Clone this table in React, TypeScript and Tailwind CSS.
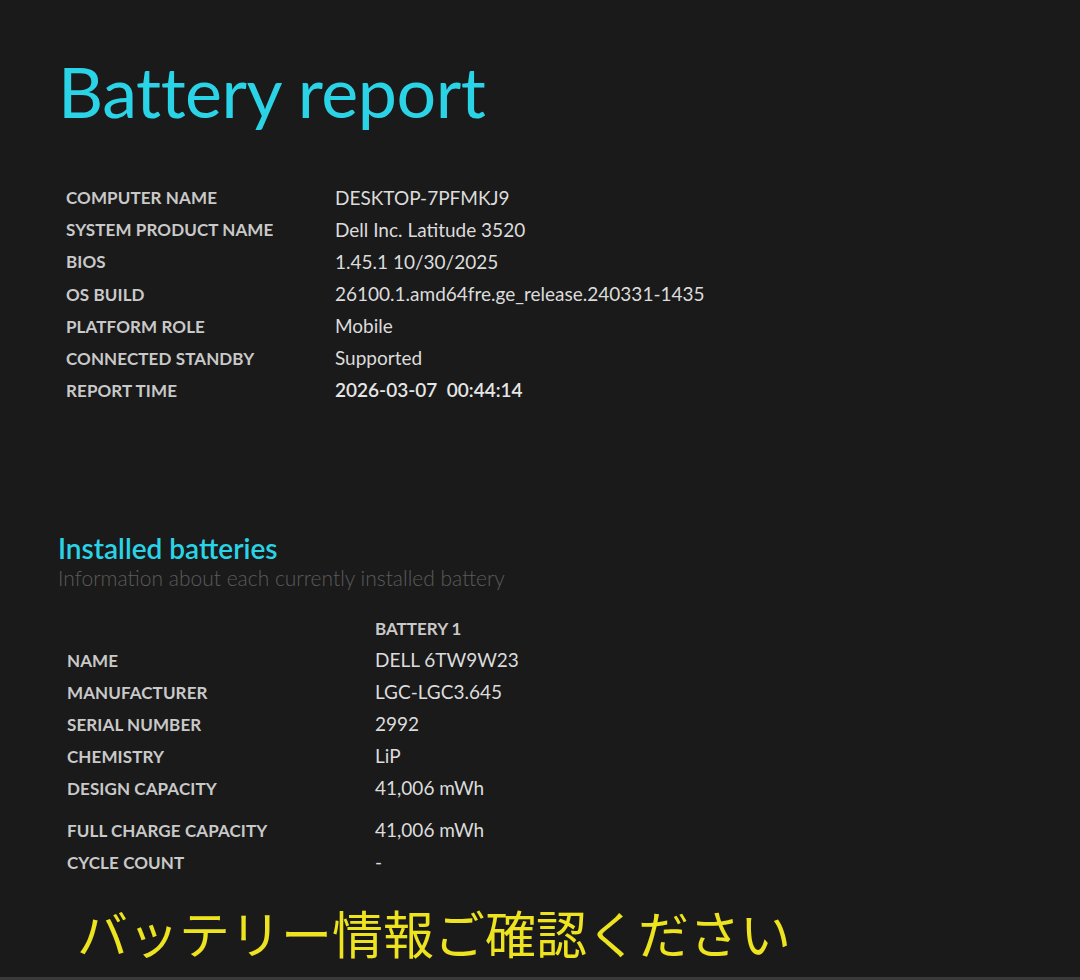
import React from 'react';

const systemRows: [string, string][] = [
  ['COMPUTER NAME', 'DESKTOP-7PFMKJ9'],
  ['SYSTEM PRODUCT NAME', 'Dell Inc. Latitude 3520'],
  ['BIOS', '1.45.1 10/30/2025'],
  ['OS BUILD', '26100.1.amd64fre.ge_release.240331-1435'],
  ['PLATFORM ROLE', 'Mobile'],
  ['CONNECTED STANDBY', 'Supported'],
];

const batteryRows: [string, string][] = [
  ['NAME', 'DELL 6TW9W23'],
  ['MANUFACTURER', 'LGC-LGC3.645'],
  ['SERIAL NUMBER', '2992'],
  ['CHEMISTRY', 'LiP'],
  ['DESIGN CAPACITY', '41,006 mWh'],
];

const Label: React.FC<{ children: React.ReactNode }> = ({ children }) => (
  <span className="text-[17px] font-bold tracking-[0.1px] text-[#c9c9c9]">{children}</span>
);

const App: React.FC = () => {
  return (
    <div
      className="h-[980px] w-[1080px] overflow-hidden bg-[#1a1a1a] flex flex-col"
      style={{ fontFamily: 'Lato, "Noto Sans", sans-serif' }}
    >
      {/* Title */}
      <h1 className="ml-[58px] mt-[46px] text-[70px] leading-[90px] text-[#2bd3e6] tracking-[-0.5px]">
        Battery report
      </h1>

      {/* System info */}
      <div className="ml-[66px] mt-[46px] flex flex-col">
        {systemRows.map(([k, v]) => (
          <div key={k} className="flex h-[32.1px] items-center">
            <div className="w-[269px]">
              <Label>{k}</Label>
            </div>
            <span className="text-[19px] text-[#dcdcdc]">{v}</span>
          </div>
        ))}
        <div className="flex h-[32.1px] items-center">
          <div className="w-[269px]">
            <Label>REPORT TIME</Label>
          </div>
          <span className="text-[19px] font-semibold text-[#e6e6e6]">2026-03-07&nbsp;&nbsp;00:44:14</span>
        </div>
      </div>

      {/* Installed batteries */}
      <div className="ml-[58px] mt-[126px]">
        <h2 className="text-[28px] leading-[30px] font-semibold text-[#2bd3e6]">Installed batteries</h2>
        <p className="text-[21px] leading-[30px] font-light text-[#5a5a5a]">
          Information about each currently installed battery
        </p>
      </div>

      <div className="ml-[67px] mt-[20px] flex flex-col">
        <div className="flex h-[32px] items-center">
          <div className="w-[308px]" />
          <span className="text-[17px] font-bold text-[#c9c9c9]">BATTERY 1</span>
        </div>
        {batteryRows.map(([k, v]) => (
          <div key={k} className="flex h-[32px] items-center">
            <div className="w-[308px]">
              <Label>{k}</Label>
            </div>
            <span className="text-[19px] text-[#dcdcdc]">{v}</span>
          </div>
        ))}
        <div className="flex h-[32px] mt-[10px] items-center">
          <div className="w-[308px]">
            <Label>FULL CHARGE CAPACITY</Label>
          </div>
          <span className="text-[19px] text-[#dcdcdc]">41,006 mWh</span>
        </div>
        <div className="flex h-[32px] items-center">
          <div className="w-[308px]">
            <Label>CYCLE COUNT</Label>
          </div>
          <span className="text-[19px] text-[#dcdcdc]">-</span>
        </div>
      </div>

      {/* Overlay caption */}
      <div
        className="ml-[77px] mt-[23px] text-[51px] leading-[60px] text-[#ede31f]"
        style={{ fontFamily: '"Noto Sans CJK JP", sans-serif' }}
      >
        バッテリー情報ご確認ください
      </div>

      <div className="flex-1" />
      <div className="h-[3px] bg-[#3a3a3a]" />
    </div>
  );
};

export default App;
